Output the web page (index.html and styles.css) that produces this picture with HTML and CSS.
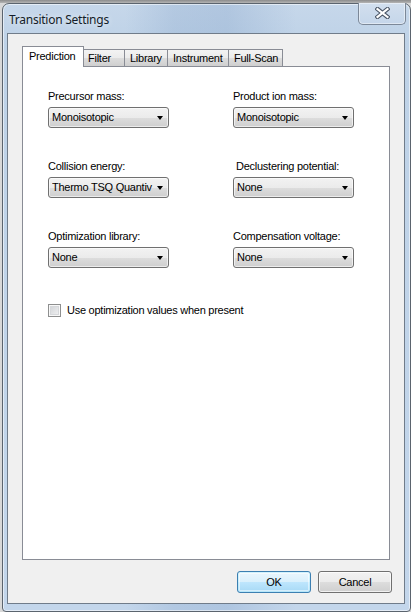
FILE: index.html
```html
<!DOCTYPE html>
<html>
<head>
<meta charset="utf-8">
<link rel="stylesheet" href="styles.css">
</head>
<body>
<div class="window">
  <div class="titlebar">
    <span class="title">Transition Settings</span>
    <div class="close">
      <svg width="15" height="12" viewBox="0 0 15 12">
        <path d="M2.5 2 L12.5 10 M12.5 2 L2.5 10" stroke="#4a5566" stroke-width="4.2" stroke-linecap="square" fill="none"/>
        <path d="M2.5 2 L12.5 10 M12.5 2 L2.5 10" stroke="#ffffff" stroke-width="2.2" stroke-linecap="square" fill="none"/>
      </svg>
    </div>
  </div>
  <div class="client">
    <div class="tabs">
      <div class="tab tab-active w-pred">Prediction</div>
      <div class="tab w-filter">Filter</div>
      <div class="tab w-lib">Library</div>
      <div class="tab w-inst">Instrument</div>
      <div class="tab w-full">Full-Scan</div>
    </div>
    <div class="panel">
      <div class="grid">
        <div class="field">
          <div class="label">Precursor mass:</div>
          <div class="combo"><span class="combo-text">Monoisotopic</span><span class="arrow"></span></div>
        </div>
        <div class="field">
          <div class="label">Product ion mass:</div>
          <div class="combo"><span class="combo-text">Monoisotopic</span><span class="arrow"></span></div>
        </div>
        <div class="field">
          <div class="label">Collision energy:</div>
          <div class="combo"><span class="combo-text">Thermo TSQ Quantiv</span><span class="arrow"></span></div>
        </div>
        <div class="field">
          <div class="label label-shift">Declustering potential:</div>
          <div class="combo"><span class="combo-text">None</span><span class="arrow"></span></div>
        </div>
        <div class="field">
          <div class="label">Optimization library:</div>
          <div class="combo"><span class="combo-text">None</span><span class="arrow"></span></div>
        </div>
        <div class="field">
          <div class="label">Compensation voltage:</div>
          <div class="combo"><span class="combo-text">None</span><span class="arrow"></span></div>
        </div>
      </div>
      <div class="check">
        <span class="box"></span>
        <span class="check-label">Use optimization values when present</span>
      </div>
    </div>
    <div class="buttons">
      <div class="btn btn-default">OK</div>
      <div class="btn">Cancel</div>
    </div>
  </div>
</div>
</body>
</html>
```
FILE: styles.css
```css
html, body {
  margin: 0;
  padding: 0;
}
body {
  width: 411px;
  height: 612px;
  background: linear-gradient(to bottom, #8c8c8c 0, #b4b4b4 3px, #d8d8d8 3px);
  overflow: hidden;
  font-family: "Liberation Sans", Arial, sans-serif;
  font-size: 11px;
  letter-spacing: -0.25px;
  color: #000;
}
.window {
  position: relative;
  margin: 3px 0 0 2px;
  width: 409px;
  height: 609px;
  box-sizing: border-box;
  border: 1px solid #5b646e;
  border-radius: 7px 7px 4px 4px;
  padding: 0 5px 7px 4px;
  display: flex;
  flex-direction: column;
  background:
    linear-gradient(90deg, rgba(255,255,255,0) 0, rgba(255,255,255,0) 30%, rgba(110,145,190,0.2) 42%, rgba(110,145,190,0.24) 55%, rgba(255,255,255,0) 72%),
    linear-gradient(to bottom, #c6d7ea 0, #bed2e7 40px, #c3d6eb 100%);
  box-shadow: inset 0 0 0 1px rgba(255,255,255,0.55);
}
.titlebar {
  height: 29px;
  flex: none;
  display: flex;
  align-items: center;
  padding-left: 2px;
}
.title {
  font-family: "Noto Sans", "Open Sans", sans-serif;
  font-size: 12px;
  color: #141c28;
  letter-spacing: -0.25px;
  margin-top: 1px;
  text-shadow: 0 0 6px rgba(255,255,255,0.8);
}
.close {
  position: absolute;
  left: 355px;
  top: -1px;
  width: 48px;
  height: 22px;
  box-sizing: border-box;
  border: 1px solid #7c8898;
  border-top: none;
  border-radius: 0 0 5px 5px;
  background: linear-gradient(to bottom, #d2dfee, #c5d6ea);
  box-shadow: inset 0 0 0 1px rgba(255,255,255,0.45);
  display: flex;
  align-items: center;
  justify-content: center;
  padding-bottom: 1px;
}
.client {
  flex: 1;
  border: 1px solid #707c8a;
  background: #f0f0f0;
  padding: 12px 14px 10px 14px;
  display: flex;
  flex-direction: column;
}
.tabs {
  height: 20px;
  display: flex;
  align-items: flex-end;
  flex: none;
}
.tab {
  box-sizing: border-box;
  height: 17px;
  border: 1px solid #898c95;
  border-bottom: none;
  margin-left: -1px;
  padding-top: 2px;
  padding-left: 5px;
  line-height: 13px;
  text-align: left;
  background: linear-gradient(to bottom, #f3f3f3 0, #ebebeb 50%, #dddddd 51%, #cfcfcf 100%);
  white-space: nowrap;
  overflow: hidden;
}
.tab-active {
  height: 21px;
  margin-left: 0;
  margin-bottom: -1px;
  padding-top: 3px;
  padding-left: 6px;
  background: #ffffff;
  position: relative;
  z-index: 1;
}
.w-pred { width: 62px; }
.w-filter { width: 42px; padding-left: 4px; }
.w-lib { width: 44px; }
.w-inst { width: 62px; }
.w-full { width: 55px; }
.panel {
  flex: 1;
  border: 1px solid #898c95;
  background: #ffffff;
  padding: 23px 0 0 25px;
}
.grid {
  display: grid;
  grid-template-columns: 121px 121px;
  column-gap: 64px;
  row-gap: 32px;
}
.field {
  display: flex;
  flex-direction: column;
  gap: 4px;
}
.label {
  line-height: 13px;
  height: 13px;
  white-space: nowrap;
}
.label-shift {
  padding-left: 3px;
}
.combo {
  box-sizing: border-box;
  height: 21px;
  border: 1px solid #707070;
  border-radius: 3px;
  background: linear-gradient(to bottom, #f2f2f2 0, #ebebeb 50%, #dddddd 51%, #cfcfcf 100%);
  box-shadow: inset 0 0 0 1px rgba(255,255,255,0.6);
  display: flex;
  align-items: center;
  padding-left: 3px;
  padding-right: 5px;
}
.combo-text {
  width: 102px;
  overflow: hidden;
  white-space: nowrap;
  line-height: 13px;
}
.arrow {
  margin-left: auto;
  width: 0;
  height: 0;
  border-left: 3.5px solid transparent;
  border-right: 3.5px solid transparent;
  border-top: 4px solid #000;
  margin-top: 1px;
}
.check {
  margin-top: 36px;
  display: flex;
  align-items: center;
  gap: 6px;
  height: 13px;
}
.box {
  width: 13px;
  height: 13px;
  box-sizing: border-box;
  border: 1px solid #8e8f8f;
  background: linear-gradient(135deg, #cdd0d4 0, #f4f4f5 100%);
  box-shadow: inset 0 0 0 1px #f8f8f8, inset 0 0 0 2px #d6d8db;
  flex: none;
}
.check-label {
  line-height: 13px;
}
.buttons {
  flex: none;
  display: flex;
  justify-content: flex-end;
  gap: 7px;
  margin-top: 11px;
  margin-right: -2px;
}
.btn {
  box-sizing: border-box;
  width: 74px;
  height: 22px;
  border: 1px solid #707070;
  border-radius: 3px;
  background: linear-gradient(to bottom, #f2f2f2 0, #ebebeb 50%, #dddddd 51%, #cfcfcf 100%);
  box-shadow: inset 0 0 0 1px rgba(255,255,255,0.7);
  display: flex;
  align-items: center;
  justify-content: center;
  line-height: 13px;
}
.btn-default {
  border-color: #3c7fb1;
  background: linear-gradient(to bottom, #eaf6fd 0, #d9f0fc 50%, #bee6fd 51%, #a7d9f5 100%);
  box-shadow: inset 0 0 0 1px rgba(72,212,252,0.2), inset 0 0 0 2px rgba(255,255,255,0.5);
}
```
